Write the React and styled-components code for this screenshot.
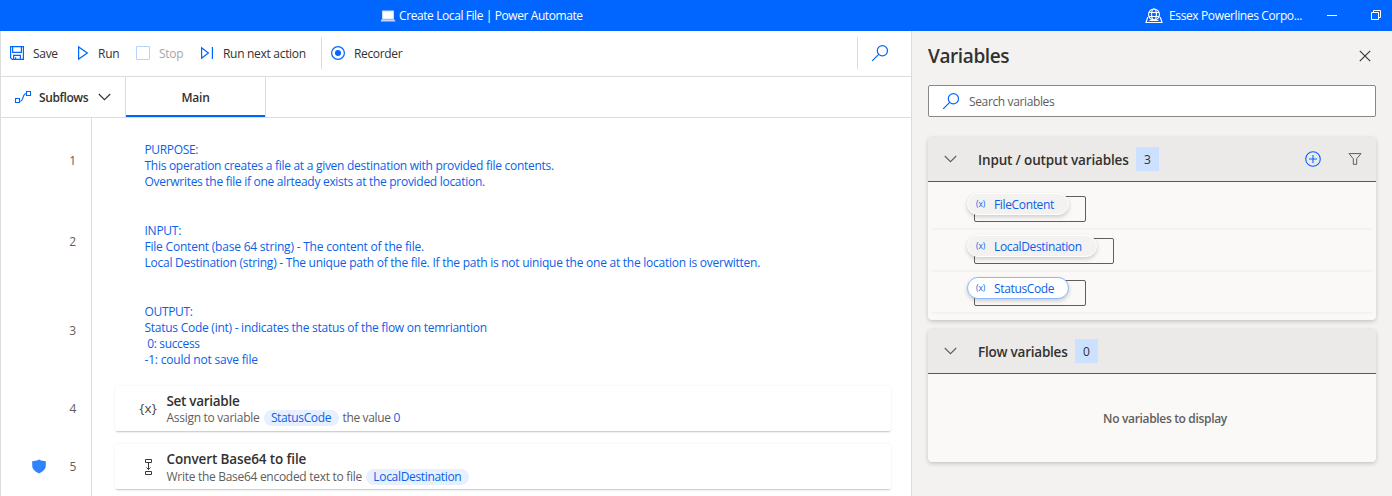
import React from "react";
import styled, { createGlobalStyle, css } from "styled-components";

const GlobalStyle = createGlobalStyle`
  * { box-sizing: border-box; }
  body {
    margin: 0;
    background: #fff;
    color: #323130;
    font-family: "Segoe UI", "Open Sans", "Noto Sans", sans-serif;
    font-size: 12px;
    line-height: 16px;
    overflow: hidden;
  }
  svg { display: block; flex: none; }
`;

const BLUE = "#0066ff";

const Window = styled.div`
  width: 1392px;
  height: 496px;
  display: flex;
  flex-direction: column;
  overflow: hidden;
`;

const Label = styled.span`
  display: inline-block;
  margin: 1px 0 -1px;
  white-space: pre;
  letter-spacing: ${(p) => p.$ls ?? -0.3}px;
`;

const TitleBar = styled.header`
  height: 31px;
  flex: none;
  display: flex;
  align-items: center;
  background: ${BLUE};
  color: #fff;
  padding-left: 380px;
  ${Label} { margin: 0; }
`;

const WindowTitle = styled.div`
  display: flex;
  align-items: center;
  gap: 3px;
  width: 765px;
`;

const Environment = styled.div`
  display: flex;
  align-items: center;
  gap: 6px;
  width: 182px;
`;

const WindowButtons = styled.div`
  display: flex;
  align-items: center;
  gap: 34px;
`;

const Main = styled.div`
  flex: 1;
  display: flex;
  min-height: 0;
`;

const Editor = styled.main`
  width: 911px;
  border-left: 1px solid #dcdcdc;
  display: flex;
  flex-direction: column;
  min-height: 0;
`;

const Toolbar = styled.div`
  height: 46px;
  flex: none;
  display: flex;
  padding: 6px 0 7px 8px;
  border-bottom: 1px solid #dcdcdc;
`;

const ToolButton = styled.div`
  width: ${(p) => p.$w}px;
  display: flex;
  align-items: center;
  gap: ${(p) => p.$gap ?? 8}px;
  color: ${(p) => (p.$disabled ? "#a6a6a6" : "#323130")};
`;

const ToolDivider = styled.div`
  width: 1px;
  background: #dcdcdc;
  margin-left: ${(p) => p.$ml}px;
  margin-right: ${(p) => p.$mr}px;
`;

const TabBar = styled.div`
  height: 41px;
  flex: none;
  display: flex;
  border-bottom: 1px solid #dcdcdc;
`;

const SubflowsButton = styled.div`
  width: 125px;
  border-right: 1px solid #dcdcdc;
  display: flex;
  align-items: center;
  padding-left: 13px;
  font-weight: 600;
  svg:last-child { margin-left: 10px; }
  svg:first-child { margin-right: 8px; }
`;

const Tab = styled.div`
  width: 140px;
  border-right: 1px solid #dcdcdc;
  display: flex;
  align-items: center;
  justify-content: center;
  font-weight: 600;
  box-shadow: inset 0 -2px 0 ${BLUE};
`;

const Steps = styled.div`
  flex: 1;
  min-height: 0;
  overflow: hidden;
  padding-top: 2px;
  background: linear-gradient(to right, transparent 90px, #dcdcdc 90px, #dcdcdc 91px, transparent 91px);
`;

const StepRow = styled.div`
  display: flex;
  min-height: 58px;
`;

const Gutter = styled.div`
  width: 91px;
  display: flex;
  align-items: center;
  justify-content: flex-end;
  padding-right: 16px;
  color: #605e5c;
  gap: 23px;
`;

const Comment = styled.div`
  padding: 21px 0 12px 52.5px;
  color: #0b5fe8;
  display: flex;
  flex-direction: column;
`;

const ActionCard = styled.div`
  width: 776px;
  height: 45px;
  margin: 7px 0 6px 23px;
  display: flex;
  align-items: center;
  border-radius: 2px;
  background: #fff;
  box-shadow: 0 2px 2px -1px rgba(0, 0, 0, 0.22), 0 0 2px rgba(0, 0, 0, 0.08);
`;

const ActionIcon = styled.div`
  width: 51.5px;
  display: flex;
  justify-content: center;
  padding-left: 15px;
`;

const Braces = styled.span`
  font-size: 13.5px;
  letter-spacing: 0.2px;
  margin-top: -1px;
  color: #484644;
`;

const ActionTitle = styled.div`
  font-size: 13.5px;
  font-weight: 600;
  line-height: 16px;
`;

const ActionText = styled.div`
  display: flex;
  align-items: center;
  color: #605e5c;
  line-height: 16px;
  margin-top: ${(p) => p.$mt ?? 1}px;
`;

const VarChip = styled.span`
  display: flex;
  justify-content: center;
  width: ${(p) => p.$w}px;
  height: 16px;
  margin: 1px 4px -1px ${(p) => p.$ml ?? 4}px;
  line-height: 16px;
  border-radius: 8px;
  background: #e6f0ff;
  color: #0b5fe8;
  ${Label} { margin: 0; }
`;

const BlueText = styled(Label)`
  color: #0b5fe8;
`;

const Panel = styled.aside`
  flex: 1;
  background: #f3f2f1;
  border-left: 1px solid #dcdcdc;
  padding: 0 16px;
`;

const PanelHeader = styled.div`
  height: 54px;
  display: flex;
  align-items: center;
  justify-content: space-between;
  padding: 0 5px 4px 0;
`;

const PanelTitle = styled.h1`
  margin: 0;
  font-size: 19px;
  font-weight: 600;
  line-height: 26px;
  ${Label} { margin: 0; }
`;

const SearchBox = styled.div`
  height: 32px;
  display: flex;
  align-items: center;
  gap: 9px;
  padding-left: 13px;
  border: 1px solid #8a8886;
  border-radius: 2px;
  background: #fff;
  color: #605e5c;
`;

const Card = styled.section`
  margin-top: ${(p) => p.$mt}px;
  border-radius: 4px;
  background: #faf9f8;
  box-shadow: 0 2px 4px rgba(0, 0, 0, 0.16), 0 0 3px rgba(0, 0, 0, 0.06);
`;

const CardHeader = styled.div`
  height: 45px;
  display: flex;
  align-items: center;
  padding-left: 16px;
  background: #ebeae8;
  border-bottom: 1px solid ${BLUE};
  border-radius: 4px 4px 0 0;
`;

const CardTitle = styled.div`
  width: ${(p) => p.$w}px;
  margin-left: 21px;
  font-size: 13.5px;
  font-weight: 600;
`;

const Count = styled.div`
  width: 23px;
  height: 24px;
  line-height: 25px;
  text-align: center;
  font-weight: 500;
  background: #cce0ff;
`;

const CardActions = styled.div`
  display: flex;
  align-items: center;
  gap: 27px;
  margin-left: auto;
  padding-right: 14px;
`;

const VarList = styled.div`
  padding: 6px 4px;
`;

const VarRow = styled.div`
  height: 42px;
  border-bottom: 2px solid #f3f2f1;
  padding: 8px 0 0 42px;
`;

const VarFrame = styled.div`
  position: relative;
  width: ${(p) => p.$w}px;
  height: 26px;
  border: 1px solid #605e5c;
  border-radius: 2px;
`;

const VarPill = styled.div`
  position: absolute;
  left: -8px;
  top: -4px;
  width: ${(p) => p.$w}px;
  height: 22px;
  display: flex;
  align-items: center;
  gap: 7px;
  padding-left: 8px;
  border-radius: 11px;
  color: #0b5fe8;
  border: 1px solid #fff;
  background: #f3f2f1;
  box-shadow: 0 2px 4px rgba(0, 0, 0, 0.18);
  ${(p) => p.$active && css`
    border-color: #8ab8ff;
    background: #fff;
  `}
`;

const VarGlyph = styled.span`
  width: 11px;
  font-size: 8.5px;
  line-height: 12px;
  margin-top: -1px;
  letter-spacing: -0.1px;
  white-space: nowrap;
`;

const Empty = styled.div`
  height: 88px;
  padding-left: 26px;
  line-height: 88px;
  text-align: center;
  font-weight: 600;
  color: #605e5c;
`;

const Stroke = ({ w, h, color = BLUE, sw = 1, children, ...rest }) => (
  <svg width={w} height={h} viewBox={`0 0 ${w} ${h}`} fill="none" stroke={color} strokeWidth={sw} {...rest}>
    {children}
  </svg>
);

const LaptopIcon = () => (
  <svg width="16" height="12" viewBox="0 0 16 12">
    <rect x="2.5" y="1" width="11" height="8" fill="#fff" stroke="#c9dcff" />
    <path d="M1.5 9.5h13l1 2H.5z" fill="#c4d6f5" />
  </svg>
);

const GlobeIcon = () => (
  <Stroke w={18} h={16} color="#fff" sw={1.15}>
    <circle cx="9" cy="6.5" r="5.5" />
    <ellipse cx="9" cy="6.5" rx="2.4" ry="5.5" />
    <path d="M4 4.5h10M4 8.5h10M3.2 9.5h-.6L1 14.5h16L15.4 9.5h-.7M4.5 12.5h9" />
  </Stroke>
);

const SaveIcon = () => (
  <Stroke w={16} h={16} sw={1.2}>
    <path d="M1.6 1.6h12.8v12.8H3.2L1.6 12.8zM3.6 1.6v5.8h8.8V1.6M4.6 14.4v-4h6.8v4M6.6 14.4v-2.2" />
  </Stroke>
);

const PlayIcon = () => (
  <Stroke w={14} h={16} sw={1.2}>
    <path d="M2.6 1.9v12.2L11.4 8z" />
  </Stroke>
);

const StopIcon = () => (
  <Stroke w={14} h={14} color="#b9d3fb">
    <path d="M.5.5h13v13H.5z" />
  </Stroke>
);

const NextIcon = () => (
  <Stroke w={15} h={16} sw={1.2}>
    <path d="M2.6 2.8v10.4L9.4 8zM13.4 2v12" />
  </Stroke>
);

const RecordIcon = () => (
  <Stroke w={14} h={14} sw={1.2}>
    <circle cx="7" cy="7" r="6.4" />
    <circle cx="7" cy="7" r="3" fill={BLUE} stroke="none" />
  </Stroke>
);

const SearchIcon = () => (
  <Stroke w={18} h={18} sw={1.2}>
    <circle cx="11.4" cy="6.8" r="5.1" />
    <path d="M7.7 10.4L1.2 16.9" />
  </Stroke>
);

const SubflowIcon = () => (
  <Stroke w={17} h={14} sw={1.1}>
    <path d="M1.5 8.5h4v4h-4zM12.5 1.5h4v4h-4zM5.500 11.500c3 0 2.500-1.500 3.500-4s1-4 3.500-4" />
  </Stroke>
);

const Chevron = ({ color = "#323130" }) => (
  <Stroke w={13} h={8} color={color} sw={1.1}>
    <path d="M.8 1l5.7 5.7L12.2 1" />
  </Stroke>
);

const ShieldIcon = () => (
  <svg width="14" height="15" viewBox="0 0 14 15">
    <path d="M7 .5c2 1.3 4.3 1.7 6.8 1.7v4.6c0 3.700-3.200 6-6.800 7.600C3.400 12.800.2 10.500.2 6.800V2.200C2.700 2.200 5 1.800 7 .5z" fill="#2f83ff" />
  </svg>
);

const ConvertIcon = () => (
  <Stroke w={9} h={18} color="#3b3a39">
    <path d="M1.500 1.500h6v3h-6zM1.500 13.500h6v3h-6zM4.500 5v6.500M2.500 9.500l2 2 2-2" />
  </Stroke>
);

const CloseIcon = () => (
  <Stroke w={12} h={12} color="#323130" sw={1.1}>
    <path d="M.8.8l10.400 10.400M11.200.8L.8 11.200" />
  </Stroke>
);

const AddIcon = () => (
  <Stroke w={16} h={16} sw={1.1}>
    <circle cx="8" cy="8" r="7.300" />
    <path d="M8 4v8M4 8h8" />
  </Stroke>
);

const FilterIcon = () => (
  <Stroke w={14} h={12} color="#605e5c">
    <path d="M1 .6h12L8.700 5.800v5.500H5.300V5.800z" />
  </Stroke>
);

const comments = [
  [
    ["PURPOSE:", -0.35],
    ["This operation creates a file at a given destination with provided file contents.", -0.28],
    ["Overwrites the file if one alrteady exists at the provided location.", -0.29],
  ],
  [
    ["INPUT:", -0.25],
    ["File Content (base 64 string) - The content of the file.", -0.21],
    ["Local Destination (string) - The unique path of the file. If the path is not uinique the one at the location is overwitten.", -0.25],
  ],
  [
    ["OUTPUT:", -0.35],
    ["Status Code (int) - indicates the status of the flow on temriantion", -0.26],
    [" 0: success", -0.35],
    ["-1: could not save file", -0.2],
  ],
];

const variables = [
  { name: "FileContent", pill: 102, frame: 112 },
  { name: "LocalDestination", pill: 130, frame: 140 },
  { name: "StatusCode", pill: 102, frame: 112, active: true },
];

export default function App() {
  return (
    <Window>
      <GlobalStyle />
      <TitleBar>
        <WindowTitle>
          <LaptopIcon />
          <Label $ls={-0.41}>Create Local File | Power Automate</Label>
        </WindowTitle>
        <Environment>
          <GlobeIcon />
          <Label $ls={-0.37}>Essex Powerlines Corpo...</Label>
        </Environment>
        <WindowButtons>
          <Stroke w={10} h={10} color="#fff"><path d="M0 4.5h10" /></Stroke>
          <Stroke w={11} h={11} color="#fff">
            <path d="M.5 2.5h7v7h-7zM2.5 2.5v-2h7v7h-2" />
          </Stroke>
        </WindowButtons>
      </TitleBar>
      <Main>
        <Editor>
          <Toolbar>
            <ToolButton $w={67}><SaveIcon /><Label>Save</Label></ToolButton>
            <ToolButton $w={60}><PlayIcon /><Label $ls={-0.2}>Run</Label></ToolButton>
            <ToolButton $w={63} $gap={9} $disabled><StopIcon /><Label>Stop</Label></ToolButton>
            <ToolButton $w={121} $gap={9}><NextIcon /><Label>Run next action</Label></ToolButton>
            <ToolDivider $ml={1} $mr={9} />
            <ToolButton $w={100} $gap={9}><RecordIcon /><Label $ls={-0.35}>Recorder</Label></ToolButton>
            <ToolDivider $ml={426} $mr={13} />
            <ToolButton $w={18}><SearchIcon /></ToolButton>
          </Toolbar>
          <TabBar>
            <SubflowsButton><SubflowIcon /><Label $ls={-0.4}>Subflows</Label><Chevron /></SubflowsButton>
            <Tab><Label $ls={-0.2}>Main</Label></Tab>
          </TabBar>
          <Steps>
            {comments.map((lines, i) => (
              <StepRow key={i}>
                <Gutter>{i + 1}</Gutter>
                <Comment>
                  {lines.map(([text, ls]) => <Label key={text} $ls={ls}>{text}</Label>)}
                </Comment>
              </StepRow>
            ))}
            <StepRow>
              <Gutter><Label>4</Label></Gutter>
              <ActionCard>
                <ActionIcon><Braces>{"{x}"}</Braces></ActionIcon>
                <div>
                  <ActionTitle><Label>Set variable</Label></ActionTitle>
                  <ActionText $mt={0.5}>
                    <Label $ls={-0.28}>Assign to variable</Label>
                    <VarChip $w={75}><Label $ls={-0.35}>StatusCode</Label></VarChip>
                    <Label $ls={-0.35}>the value </Label><BlueText>0</BlueText>
                  </ActionText>
                </div>
              </ActionCard>
            </StepRow>
            <StepRow>
              <Gutter><ShieldIcon /><Label>5</Label></Gutter>
              <ActionCard>
                <ActionIcon><ConvertIcon /></ActionIcon>
                <div>
                  <ActionTitle><Label $ls={-0.12}>Convert Base64 to file</Label></ActionTitle>
                  <ActionText>
                    <Label $ls={-0.29}>Write the Base64 encoded text to file</Label>
                    <VarChip $w={103}><Label $ls={-0.33}>LocalDestination</Label></VarChip>
                  </ActionText>
                </div>
              </ActionCard>
            </StepRow>
          </Steps>
        </Editor>
        <Panel>
          <PanelHeader>
            <PanelTitle><Label $ls={-0.4}>Variables</Label></PanelTitle>
            <CloseIcon />
          </PanelHeader>
          <SearchBox><SearchIcon /><Label $ls={-0.37}>Search variables</Label></SearchBox>
          <Card $mt={20}>
            <CardHeader>
              <Chevron color="#605e5c" />
              <CardTitle $w={158}><Label $ls={-0.15}>Input / output variables</Label></CardTitle>
              <Count>3</Count>
              <CardActions><AddIcon /><FilterIcon /></CardActions>
            </CardHeader>
            <VarList>
              {variables.map((v) => (
                <VarRow key={v.name}>
                  <VarFrame $w={v.frame}>
                    <VarPill $w={v.pill} $active={v.active}>
                      <VarGlyph>(x)</VarGlyph>
                      <Label $ls={-0.35}>{v.name}</Label>
                    </VarPill>
                  </VarFrame>
                </VarRow>
              ))}
            </VarList>
          </Card>
          <Card $mt={9}>
            <CardHeader>
              <Chevron color="#605e5c" />
              <CardTitle $w={97}><Label $ls={-0.23}>Flow variables</Label></CardTitle>
              <Count>0</Count>
            </CardHeader>
            <Empty><Label $ls={-0.33}>No variables to display</Label></Empty>
          </Card>
        </Panel>
      </Main>
    </Window>
  );
}
